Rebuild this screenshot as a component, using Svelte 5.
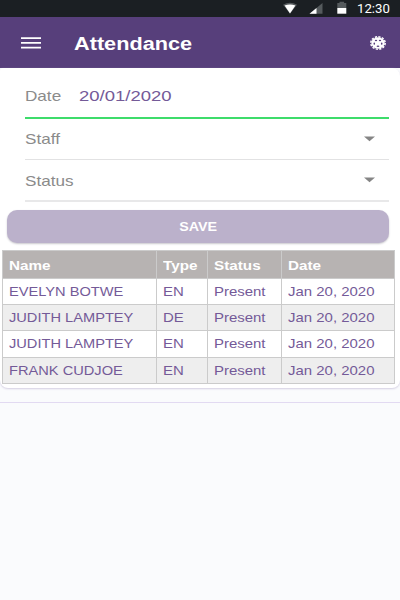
<script lang="ts">
  type Row = { name: string; type: string; status: string; date: string };

  const rows: Row[] = [
    { name: "EVELYN BOTWE", type: "EN", status: "Present", date: "Jan 20, 2020" },
    { name: "JUDITH LAMPTEY", type: "DE", status: "Present", date: "Jan 20, 2020" },
    { name: "JUDITH LAMPTEY", type: "EN", status: "Present", date: "Jan 20, 2020" },
    { name: "FRANK CUDJOE", type: "EN", status: "Present", date: "Jan 20, 2020" },
  ];
  const fields = ["Staff", "Status"];
  const columns = ["Name", "Type", "Status", "Date"];
</script>

<div class="screen">
  <div class="status-bar">
    <svg width="74" height="17" viewBox="0 0 74 17">
      <path d="M0 4.7Q7 .8 14 4.7L7 13.4Z" fill="#555a5d" />
      <path d="M1.6 5.6Q7 3.6 12.4 5.6L7 13.6Z" fill="#fff" />
      <path d="M26.5 13.7 39.5 3V13.7Z" fill="#555a5d" />
      <path d="M26.5 13.7 33.5 8V13.7Z" fill="#fff" />
      <path d="M54.3 3h2.2V1.8h4.6V3h2.2v5h-9z" fill="#555a5d" />
      <path d="M54.3 8h9v5.7h-9z" fill="#fff" />
    </svg>
    <span class="wide clock">12:30</span>
  </div>

  <header>
    <button class="menu" aria-label="Menu">
      <svg width="20" height="12" viewBox="0 0 20 12">
        <path d="M0 1.1h20M0 5.9h20M0 10.6h20" stroke="#fff" stroke-width="1.6" />
      </svg>
    </button>
    <h1 class="wide">Attendance</h1>
    <svg class="gear" width="16" height="14" viewBox="-8 -7 16 14">
      <ellipse rx="7.2" ry="6.2" fill="none" stroke="#fff" stroke-width="1.5" stroke-dasharray="2.2 1.3" />
      <ellipse rx="6.7" ry="5.8" fill="#fff" />
      <g fill="#573f7b">
        <ellipse cx="-2" cy="-2.5" rx="1.2" ry=".8" />
        <ellipse cx="2" cy="-2.5" rx="1.2" ry=".8" />
        <ellipse cx="-3.7" cy=".7" rx=".8" ry="1.1" />
        <ellipse cx="3.7" cy=".7" rx=".8" ry="1.1" />
        <ellipse cx="0" cy="3.2" rx="1.4" ry=".7" />
      </g>
    </svg>
  </header>

  <main>
    <div class="field active">
      <span class="wide date-label">Date</span>
      <span class="wide date">20/01/2020</span>
    </div>
    {#each fields as field}
      <div class="field">
        <span class="wide">{field}</span>
        <svg class="arrow" width="11" height="6" viewBox="0 0 11 6">
          <path d="M0 .5h11L5.5 5.2z" fill="#858585" />
        </svg>
      </div>
    {/each}

    <button class="save"><span class="wide">SAVE</span></button>

    <div class="table">
      {#each columns as column}
        <div class="cell head"><span class="wide">{column}</span></div>
      {/each}
      {#each rows as row, index}
        {#each [row.name, row.type, row.status, row.date] as value, i}
          <div class="cell" class:even={index % 2 === 1} class:name={i === 0}>
            <span class="wide">{value}</span>
          </div>
        {/each}
      {/each}
    </div>
  </main>
  <div class="divider"></div>
</div>

<style>
  :global(body) {
    margin: 0;
  }

  .screen {
    width: 400px;
    height: 600px;
    overflow: hidden;
    background: #fafbfd;
    font-family: "Liberation Sans", Arial, sans-serif;
  }

  button {
    border: 0;
    padding: 0;
    font-family: inherit;
  }

  .wide {
    display: inline-block;
    white-space: nowrap;
    transform: scaleX(1.15);
    transform-origin: left center;
  }

  .status-bar {
    height: 17px;
    background: #1b1f23;
    color: #fff;
    display: flex;
    padding-left: 283px;
  }

  .clock {
    font: 400 12px/18px Roboto, sans-serif;
    transform: scaleX(1.1);
  }

  header {
    height: 51px;
    box-sizing: border-box;
    background: #573f7b;
    display: flex;
    align-items: center;
    padding: 0 14px 0 21px;
  }

  .menu {
    width: 20px;
    height: 12px;
    background: none;
  }

  .menu svg {
    display: block;
  }

  h1 {
    margin: 2px 0 0 33px;
    color: #fff;
    font-size: 18px;
    line-height: 24px;
  }

  h1.wide {
    transform: scaleX(1.205);
  }

  .gear {
    margin-left: auto;
  }

  main {
    height: 320px;
    box-sizing: border-box;
    background: #fff;
    border-radius: 3px 8px 8px 8px;
    box-shadow: 0 1px 2px #d4cfe2;
  }

  .field {
    height: 41px;
    box-sizing: border-box;
    margin: 0 11px 0 25px;
    border-bottom: 1px solid #e2e2e3;
    display: flex;
    align-items: center;
    color: #8b8b8b;
    font-size: 14.5px;
    line-height: 18px;
  }

  .field:nth-child(3) {
    height: 42px;
    border-bottom: 2px solid #e8e8e9;
  }

  .field:nth-child(3) .wide {
    padding-top: 2px;
  }

  .field .wide {
    transform: scaleX(1.18);
  }

  .field.active {
    height: 51px;
    padding-top: 6px;
    border-bottom: 2px solid #3ddc6b;
  }

  .date-label {
    width: 54px;
  }

  .field .date {
    color: #745a98;
    transform: scaleX(1.275);
  }

  .arrow {
    margin-left: auto;
    margin-right: 14px;
  }

  .save {
    display: block;
    width: 382px;
    height: 33px;
    margin: 8px 0 0 7px;
    border-radius: 10px;
    background: #bbb1cb;
    box-shadow: 0 1px 2px #c9c8cd;
    color: #fff;
    font-size: 13px;
    font-weight: bold;
  }

  .save .wide {
    transform: scaleX(1.1);
    transform-origin: center;
  }

  .table {
    width: 393px;
    height: 134px;
    box-sizing: border-box;
    margin: 7px 0 0 2px;
    border-top: 1px solid #cbcbcb;
    border-left: 1px solid #cbcbcb;
    display: grid;
    grid-template-columns: 154px 51px 74px 113px;
    grid-template-rows: 28px 26px 26px 27px 26px;
  }

  .cell {
    box-sizing: border-box;
    border-right: 1px solid #cbcbcb;
    border-bottom: 1px solid #cbcbcb;
    padding-left: 6.4px;
    display: flex;
    align-items: center;
    color: #745a98;
    font-size: 13px;
    line-height: 20px;
  }

  .cell.even {
    background: #eee;
  }

  .cell.name .wide {
    transform: scaleX(1.125);
  }

  .cell.head {
    background: #b7b3b2;
    color: #fff;
    font-size: 12.5px;
    font-weight: bold;
    padding-top: 2px;
  }

  .head .wide {
    transform: scaleX(1.22);
  }

  .divider {
    margin-top: 14px;
    height: 1px;
    background: #e2daf2;
  }
</style>
